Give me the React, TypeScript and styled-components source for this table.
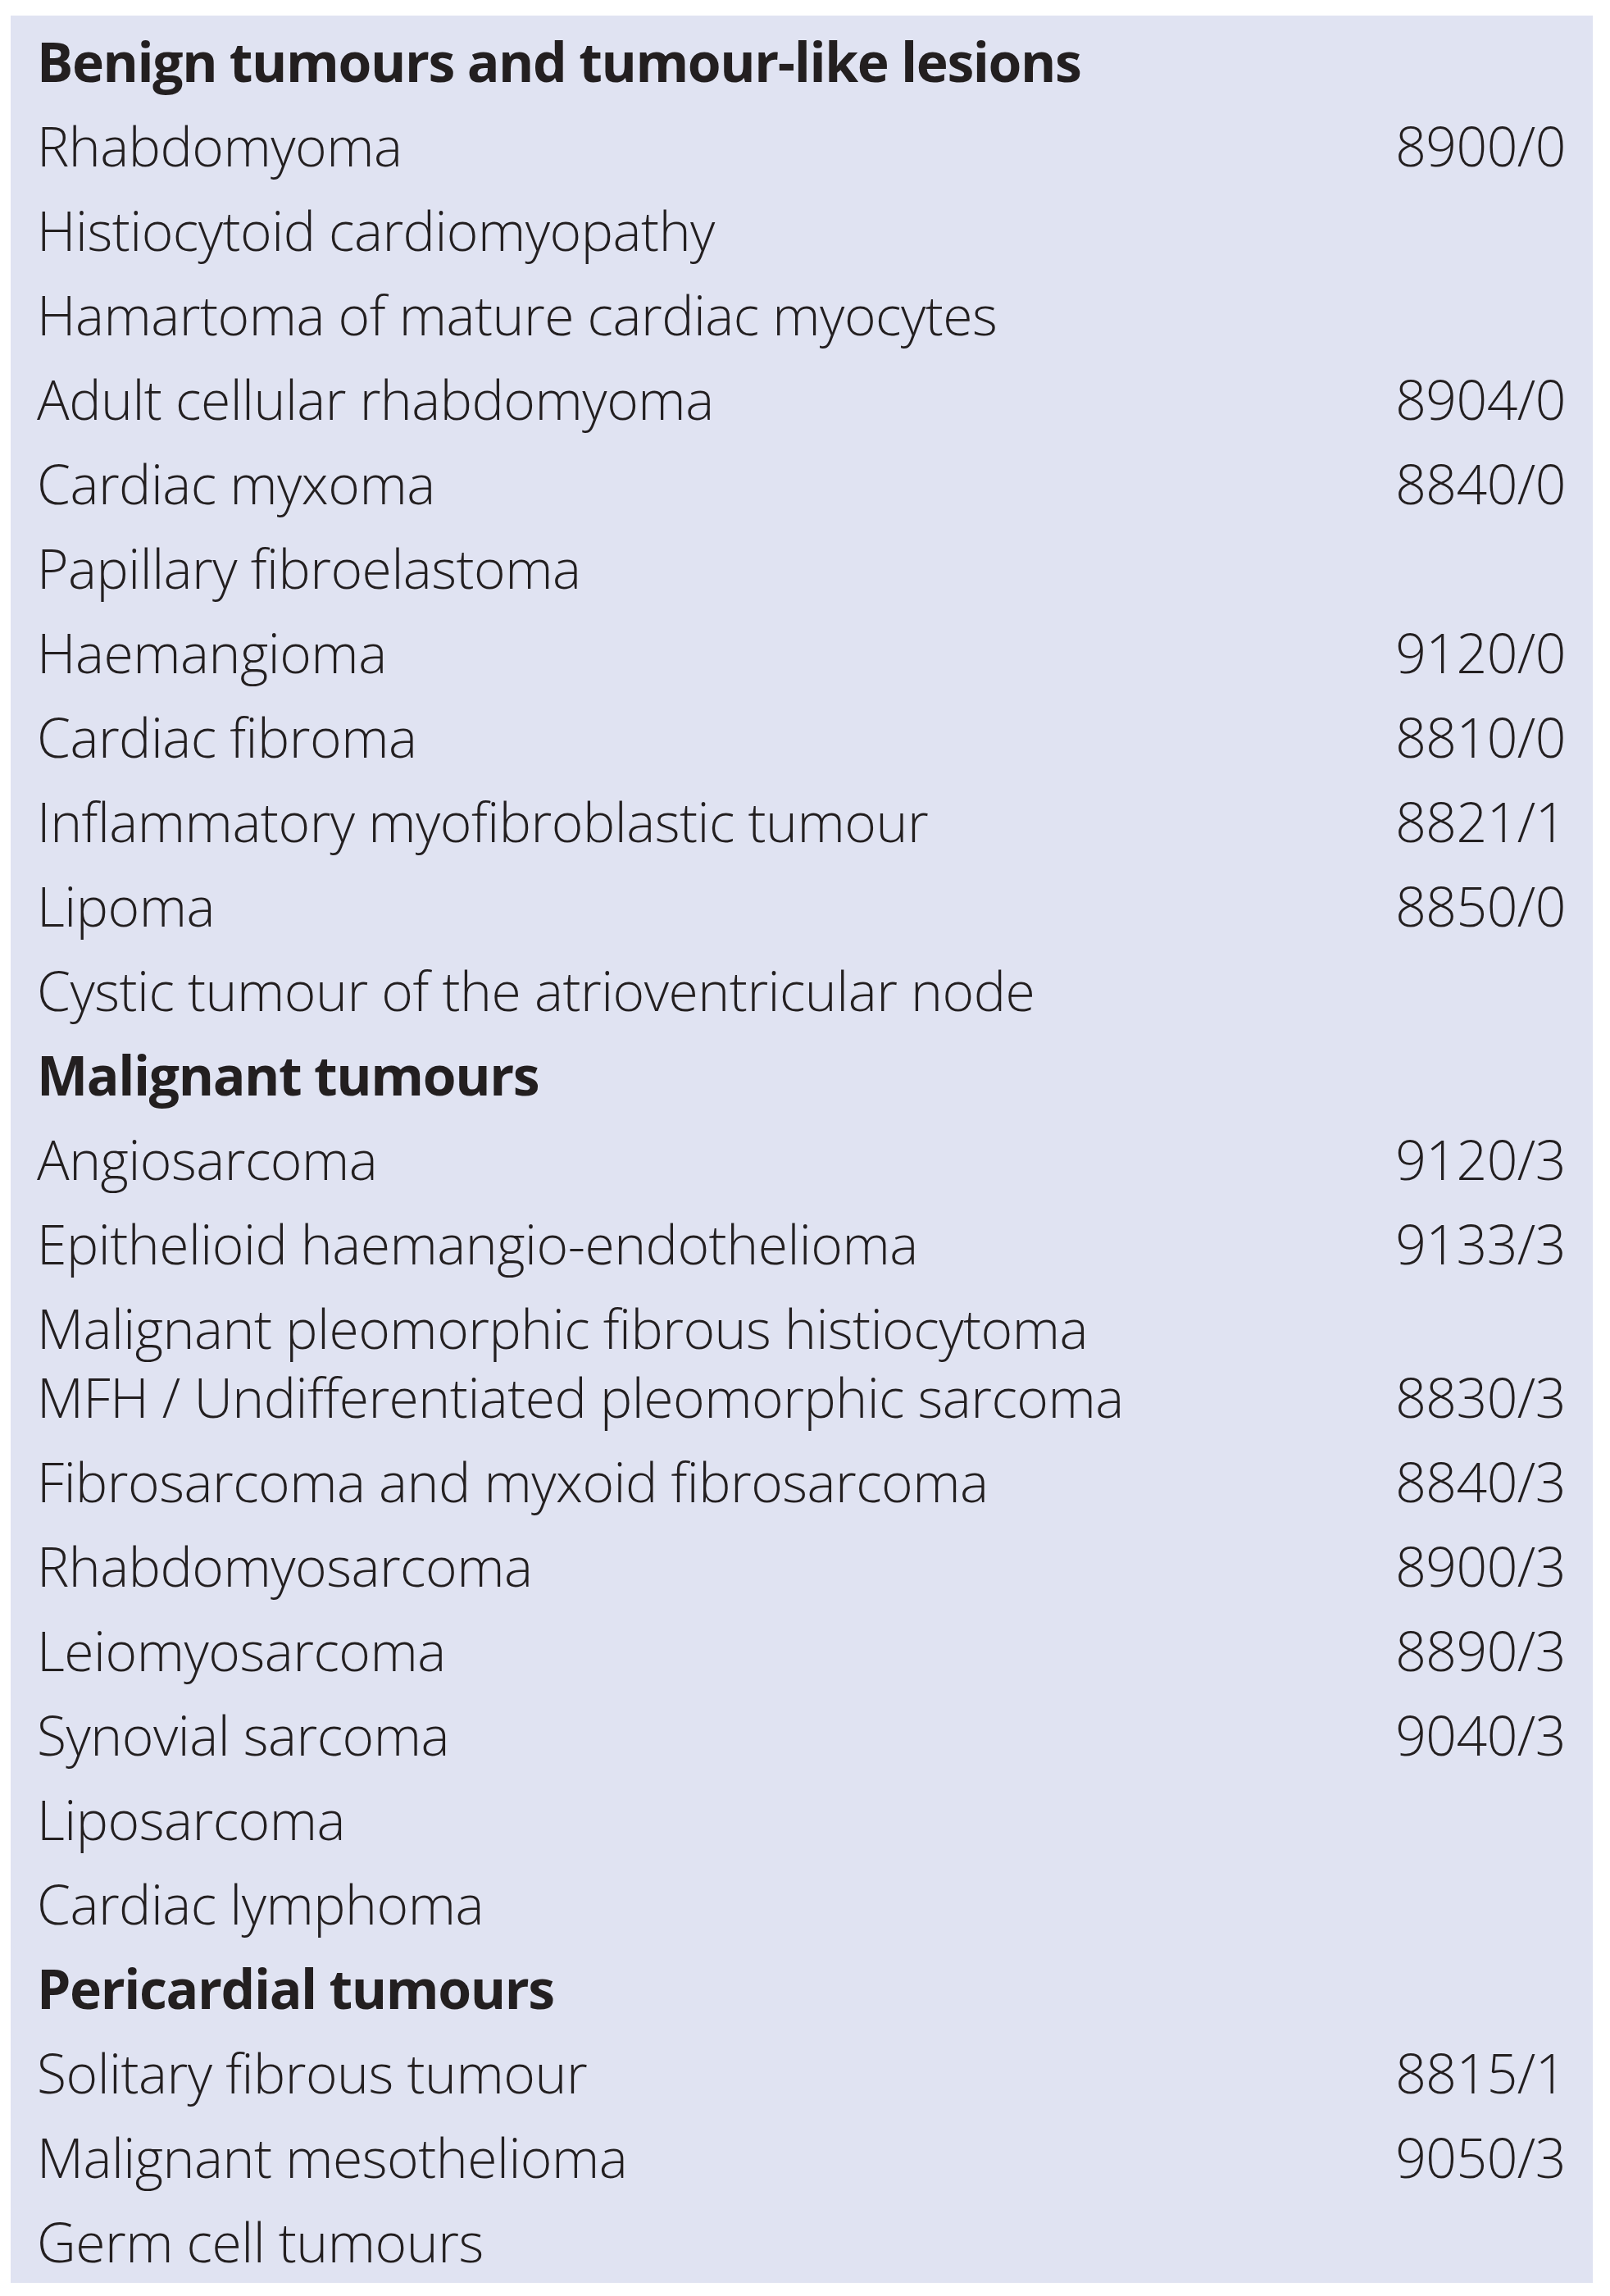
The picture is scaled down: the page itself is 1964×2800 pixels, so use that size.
import React from "react";
import styled, { createGlobalStyle } from "styled-components";

const Global = createGlobalStyle`
  html, body { margin: 0; padding: 0; background: #ffffff; }
  body { width: 1964px; min-height: 2800px; }
`;

const Page = styled.div`
  padding: 19px 21px 16px 13px;
`;

const Panel = styled.section`
  background: #e0e3f2;
  padding: 3px 33px 0 32px;
  color: #231f20;
  font-family: "Open Sans", "Noto Sans", sans-serif;
`;

const Row = styled.div<{ $bold?: boolean }>`
  display: flex;
  justify-content: space-between;
  align-items: flex-start;
  padding: 9.5px 0;
  font-size: 66px;
  line-height: 84px;
  font-weight: ${(p) => (p.$bold ? 700 : 300)};
  letter-spacing: ${(p) => (p.$bold ? "-1.4px" : "-0.5px")};
  white-space: nowrap;
`;

const Name = styled.div`
  display: flex;
  flex-direction: column;
`;

const Code = styled.span`
  font-variant-numeric: tabular-nums;
  align-self: flex-end;
`;

type Item = { kind: "h"; text: string } | { kind: "r"; lines: string[]; code?: string };

const items: Item[] = [
  { kind: "h", text: "Benign tumours and tumour-like lesions" },
  { kind: "r", lines: ["Rhabdomyoma"], code: "8900/0" },
  { kind: "r", lines: ["Histiocytoid cardiomyopathy"] },
  { kind: "r", lines: ["Hamartoma of mature cardiac myocytes"] },
  { kind: "r", lines: ["Adult cellular rhabdomyoma"], code: "8904/0" },
  { kind: "r", lines: ["Cardiac myxoma"], code: "8840/0" },
  { kind: "r", lines: ["Papillary fibroelastoma"] },
  { kind: "r", lines: ["Haemangioma"], code: "9120/0" },
  { kind: "r", lines: ["Cardiac fibroma"], code: "8810/0" },
  { kind: "r", lines: ["Inflammatory myofibroblastic tumour"], code: "8821/1" },
  { kind: "r", lines: ["Lipoma"], code: "8850/0" },
  { kind: "r", lines: ["Cystic tumour of the atrioventricular node"] },
  { kind: "h", text: "Malignant tumours" },
  { kind: "r", lines: ["Angiosarcoma"], code: "9120/3" },
  { kind: "r", lines: ["Epithelioid haemangio-endothelioma"], code: "9133/3" },
  {
    kind: "r",
    lines: ["Malignant pleomorphic fibrous histiocytoma", "MFH / Undifferentiated pleomorphic sarcoma"],
    code: "8830/3",
  },
  { kind: "r", lines: ["Fibrosarcoma and myxoid fibrosarcoma"], code: "8840/3" },
  { kind: "r", lines: ["Rhabdomyosarcoma"], code: "8900/3" },
  { kind: "r", lines: ["Leiomyosarcoma"], code: "8890/3" },
  { kind: "r", lines: ["Synovial sarcoma"], code: "9040/3" },
  { kind: "r", lines: ["Liposarcoma"] },
  { kind: "r", lines: ["Cardiac lymphoma"] },
  { kind: "h", text: "Pericardial tumours" },
  { kind: "r", lines: ["Solitary fibrous tumour"], code: "8815/1" },
  { kind: "r", lines: ["Malignant mesothelioma"], code: "9050/3" },
  { kind: "r", lines: ["Germ cell tumours"] },
];

export default function App() {
  return (
    <>
      <Global />
      <Page>
        <Panel>
          {items.map((it, i) =>
            it.kind === "h" ? (
              <Row key={i} $bold>
                <span>{it.text}</span>
              </Row>
            ) : (
              <Row key={i}>
                <Name>
                  {it.lines.map((l) => (
                    <span key={l}>{l}</span>
                  ))}
                </Name>
                {it.code && <Code>{it.code}</Code>}
              </Row>
            )
          )}
        </Panel>
      </Page>
    </>
  );
}
